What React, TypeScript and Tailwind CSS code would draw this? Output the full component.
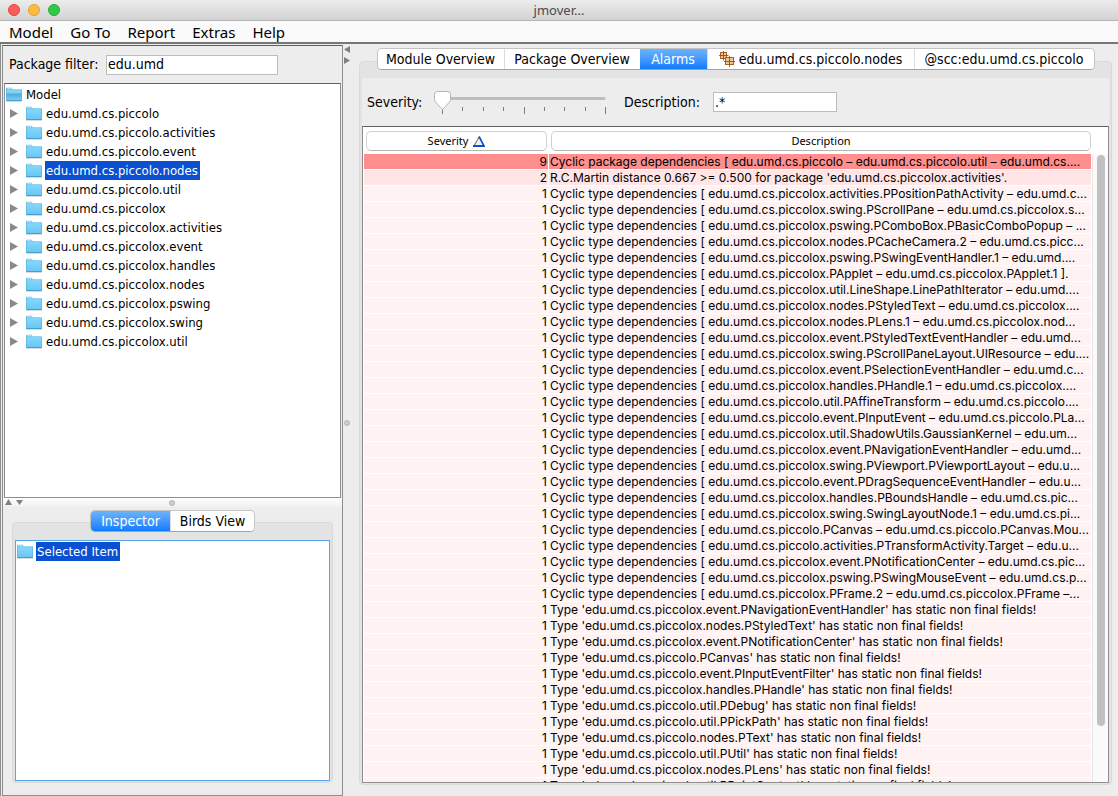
import React, { useState } from "react";
import clsx from "clsx";

interface Alarm {
  severity: number;
  text: string;
}

const PACKAGES = [
  "edu.umd.cs.piccolo",
  "edu.umd.cs.piccolo.activities",
  "edu.umd.cs.piccolo.event",
  "edu.umd.cs.piccolo.nodes",
  "edu.umd.cs.piccolo.util",
  "edu.umd.cs.piccolox",
  "edu.umd.cs.piccolox.activities",
  "edu.umd.cs.piccolox.event",
  "edu.umd.cs.piccolox.handles",
  "edu.umd.cs.piccolox.nodes",
  "edu.umd.cs.piccolox.pswing",
  "edu.umd.cs.piccolox.swing",
  "edu.umd.cs.piccolox.util",
];

const CYCLES = [
  "edu.umd.cs.piccolox.activities.PPositionPathActivity – edu.umd.c...",
  "edu.umd.cs.piccolox.swing.PScrollPane – edu.umd.cs.piccolox.s...",
  "edu.umd.cs.piccolox.pswing.PComboBox.PBasicComboPopup – ...",
  "edu.umd.cs.piccolox.nodes.PCacheCamera.2 – edu.umd.cs.picc...",
  "edu.umd.cs.piccolox.pswing.PSwingEventHandler.1 – edu.umd....",
  "edu.umd.cs.piccolox.PApplet – edu.umd.cs.piccolox.PApplet.1 ].",
  "edu.umd.cs.piccolox.util.LineShape.LinePathIterator – edu.umd....",
  "edu.umd.cs.piccolox.nodes.PStyledText – edu.umd.cs.piccolox....",
  "edu.umd.cs.piccolox.nodes.PLens.1 – edu.umd.cs.piccolox.nod...",
  "edu.umd.cs.piccolox.event.PStyledTextEventHandler – edu.umd...",
  "edu.umd.cs.piccolox.swing.PScrollPaneLayout.UIResource – edu....",
  "edu.umd.cs.piccolox.event.PSelectionEventHandler – edu.umd.c...",
  "edu.umd.cs.piccolox.handles.PHandle.1 – edu.umd.cs.piccolox....",
  "edu.umd.cs.piccolo.util.PAffineTransform – edu.umd.cs.piccolo....",
  "edu.umd.cs.piccolo.event.PInputEvent – edu.umd.cs.piccolo.PLa...",
  "edu.umd.cs.piccolox.util.ShadowUtils.GaussianKernel – edu.um...",
  "edu.umd.cs.piccolox.event.PNavigationEventHandler – edu.umd...",
  "edu.umd.cs.piccolox.swing.PViewport.PViewportLayout – edu.u...",
  "edu.umd.cs.piccolo.event.PDragSequenceEventHandler – edu.u...",
  "edu.umd.cs.piccolox.handles.PBoundsHandle – edu.umd.cs.pic...",
  "edu.umd.cs.piccolox.swing.SwingLayoutNode.1 – edu.umd.cs.pi...",
  "edu.umd.cs.piccolo.PCanvas – edu.umd.cs.piccolo.PCanvas.Mou...",
  "edu.umd.cs.piccolo.activities.PTransformActivity.Target – edu.u...",
  "edu.umd.cs.piccolox.event.PNotificationCenter – edu.umd.cs.pic...",
  "edu.umd.cs.piccolox.pswing.PSwingMouseEvent – edu.umd.cs.p...",
  "edu.umd.cs.piccolox.PFrame.2 – edu.umd.cs.piccolox.PFrame –...",
];

const STATIC_FIELDS = [
  "edu.umd.cs.piccolox.event.PNavigationEventHandler",
  "edu.umd.cs.piccolox.nodes.PStyledText",
  "edu.umd.cs.piccolox.event.PNotificationCenter",
  "edu.umd.cs.piccolo.PCanvas",
  "edu.umd.cs.piccolo.event.PInputEventFilter",
  "edu.umd.cs.piccolox.handles.PHandle",
  "edu.umd.cs.piccolo.util.PDebug",
  "edu.umd.cs.piccolo.util.PPickPath",
  "edu.umd.cs.piccolo.nodes.PText",
  "edu.umd.cs.piccolo.util.PUtil",
  "edu.umd.cs.piccolox.nodes.PLens",
  "edu.umd.cs.piccolo.util.PPaintContext",
];

const ALARMS: Alarm[] = [
  {
    severity: 9,
    text: "Cyclic package dependencies [ edu.umd.cs.piccolo – edu.umd.cs.piccolo.util – edu.umd.cs....",
  },
  {
    severity: 2,
    text: "R.C.Martin distance 0.667 >= 0.500 for package 'edu.umd.cs.piccolox.activities'.",
  },
  ...CYCLES.map((c) => ({ severity: 1, text: `Cyclic type dependencies [ ${c}` })),
  ...STATIC_FIELDS.map((t) => ({ severity: 1, text: `Type '${t}' has static non final fields!` })),
];

const FolderIcon = ({ open = false }: { open?: boolean }) => (
  <svg viewBox="0 0 16 15" className="w-4 h-[15px] shrink-0" aria-hidden="true">
    <defs>
      <linearGradient id="folderFront" x1="0" y1="0" x2="0" y2="1">
        <stop offset="0" stopColor="#84d6fb" />
        <stop offset="1" stopColor="#66c7f5" />
      </linearGradient>
      <linearGradient id="folderOpen" x1="0" y1="0" x2="0" y2="1">
        <stop offset="0" stopColor="#4ba8d4" />
        <stop offset="1" stopColor="#7ccdf3" />
      </linearGradient>
    </defs>
    <path d="M0 13V1.800Q0 .8 1 .8h4.500l1.300 1.400H15q1 0 1 .8v10z" fill="#5fb9e2" />
    <path d="M1 1.500h4.500M1 3h14" stroke="#a5e1fb" />
    <path d="M.3 3.500h15.400v10H.3z" fill="url(#folderFront)" />
    {open && <path d="M.5 6.500h15v6.500H.5z" fill="url(#folderOpen)" />}
    <path d="M0 3.500v10M16 3.500v10" stroke="#55b2de" />
    <path d="M.3 13.500h15.400" stroke="#459fcc" />
    <path d="M0 14.500h16" stroke="#000" strokeOpacity=".14" />
  </svg>
);

const Arrow = ({ dir }: { dir: "left" | "right" | "up" | "down" }) => {
  const shapes = {
    left: "M6 0v7L0 3.5z",
    right: "M0 0v7l6-3.5z",
    up: "M0 6h7L3.5 0z",
    down: "M0 1h7L3.5 6z",
  };
  return (
    <svg viewBox="0 0 7 7" className="w-[7px] h-[7px] block" aria-hidden="true">
      <path d={shapes[dir]} fill="#808080" />
    </svg>
  );
};

const PackagesIcon = () => (
  <svg viewBox="0 0 16 16" className="w-4 h-4 shrink-0" aria-hidden="true">
    <g stroke="#a5622a" fill="#f3c48c">
      <rect x="1.500" y="1.500" width="6" height="6" />
      <rect x="6.500" y="6.500" width="8" height="7" />
    </g>
    <path
      d="M4.500 0v9.500M0 4.500h9.500M10.500 5v11M5 10.500h11"
      fill="none"
      stroke="#8a4310"
      strokeOpacity=".8"
    />
  </svg>
);

const Grip = () => <span className="block w-[6px] h-[6px] rounded-full bg-[#cfcfcf] border border-[#b2b2b2]" />;

interface TabProps {
  label: string;
  active: boolean;
  width: string;
  onClick: () => void;
  icon?: React.ReactNode;
}

const Tab = ({ label, active, width, onClick, icon }: TabProps) => (
  <button
    role="tab"
    aria-selected={active}
    onClick={onClick}
    className={clsx(
      "h-5 flex items-center justify-center gap-1 text-[14px] leading-5 whitespace-nowrap",
      width,
      active
        ? "bg-gradient-to-b from-[#6cb3fa] to-[#0a7cff] text-white"
        : "bg-white text-black border-l border-[#dcdcdc] first:border-l-0"
    )}
  >
    {icon}
    {label}
  </button>
);

const MAIN_TABS = [
  { label: "Module Overview", width: "w-[126px]" },
  { label: "Package Overview", width: "w-[136px]" },
  { label: "Alarms", width: "w-[67px]" },
  { label: "edu.umd.cs.piccolo.nodes", width: "w-[207px]", icon: <PackagesIcon /> },
  { label: "@scc:edu.umd.cs.piccolo", width: "w-[180px]" },
];

const SIDE_TABS = [
  { label: "Inspector", width: "w-[79px]" },
  { label: "Birds View", width: "w-[84px]" },
];

const TAB_BAR =
  "relative z-10 flex self-center rounded-[5px] overflow-hidden border border-[#c4c4c4] border-b-[#a3a3a3]";

const SeveritySlider = () => {
  const [value, setValue] = useState(0);
  return (
    <div className="relative w-[180px] h-6">
      <svg viewBox="0 0 180 24" className="w-full h-full block" aria-hidden="true">
        <path d="M11 8.500h160" stroke="#bdbdbd" strokeWidth="3" strokeLinecap="round" />
        {[0, 1, 2, 3, 4, 5, 6, 7, 8].map((i) => (
          <path
            key={i}
            d={`M${9.5 + Math.round(i * 20.4)} 17v${i % 4 === 0 ? 7 : 4}`}
            stroke="#7d7d7d"
          />
        ))}
        <g transform={`translate(${value * 20.4} 0)`}>
          <path
            d="M4.500 1.500h10q3 0 3 3v5q0 1.500-1 2.500l-7 7.500-7-7.500q-1-1-1-2.500v-5q0-3 3-3z"
            fill="#fff"
            stroke="#b5b5b5"
          />
        </g>
      </svg>
      <input
        id="severity"
        type="range"
        min={0}
        max={8}
        value={value}
        onChange={(e) => setValue(Number(e.target.value))}
        className="absolute inset-0 w-full h-full appearance-none bg-transparent [&::-webkit-slider-thumb]:appearance-none [&::-webkit-slider-thumb]:w-4 [&::-webkit-slider-thumb]:h-5"
      />
    </div>
  );
};

const TitleBar = () => (
  <header className="relative h-[21px] shrink-0 flex items-center justify-center bg-gradient-to-b from-[#ececec] to-[#d3d3d3] border-b border-[#b4b4b4]">
    <div className="absolute left-2 flex gap-2">
      <button aria-label="Close" className="w-3 h-3 rounded-full bg-[#fc5b57] border border-[#e2443f]" />
      <button aria-label="Minimize" className="w-3 h-3 rounded-full bg-[#fdbc40] border border-[#e0a134]" />
      <button aria-label="Zoom" className="w-3 h-3 rounded-full bg-[#34c84a] border border-[#27a935]" />
    </div>
    <h1 className="font-['Noto_Sans',sans-serif] text-[13px] leading-5 text-[#4a4a4a]">jmover...</h1>
  </header>
);

const MenuBar = () => (
  <nav className="h-[23px] shrink-0 flex items-center gap-[17px] px-[9px] bg-[#fafafa] border-b-2 border-[#767676] font-['Noto_Sans',sans-serif] text-[15px] leading-5">
    {["Model", "Go To", "Report", "Extras", "Help"].map((m) => (
      <button key={m}>{m}</button>
    ))}
  </nav>
);

const PackageTree = () => {
  const [selected, setSelected] = useState("edu.umd.cs.piccolo.nodes");
  return (
    <ul className="flex-1 min-h-0 overflow-hidden bg-white border border-[#8e8e8e] border-t-[#606060] mx-px pt-px text-[13px] leading-[19px]">
      <li className="flex items-center h-[19px] pl-px">
        <FolderIcon open />
        <span className="px-1">Model</span>
      </li>
      {PACKAGES.map((p) => (
        <li key={p} className="flex items-center h-[19px] pl-[5px]">
          <svg viewBox="0 0 8 9" className="w-2 h-[9px] mr-2" aria-hidden="true">
            <path d="M0 0v9l8-4.500z" fill="#8a8a8a" />
          </svg>
          <FolderIcon />
          <button
            onClick={() => setSelected(p)}
            className={clsx("ml-[3px] pl-px pr-[2px]", p === selected && "bg-[#0a50d0] text-white")}
          >
            {p}
          </button>
        </li>
      ))}
    </ul>
  );
};

const SidePanel = () => {
  const [filter, setFilter] = useState("edu.umd");
  const [tab, setTab] = useState("Inspector");
  return (
    <aside className="w-[341px] shrink-0 flex flex-col mt-px ml-px border border-[#8e8e8e] border-t-[#606060]">
      <div className="flex items-center gap-2 h-[37px] shrink-0 px-[6px] text-[14px]">
        <label htmlFor="filter" className="w-[89px] whitespace-nowrap">
          Package filter:
        </label>
        <input
          id="filter"
          value={filter}
          onChange={(e) => setFilter(e.target.value)}
          className="w-[172px] h-5 px-px bg-white border border-[#bdbdbd] outline-none"
        />
      </div>
      <PackageTree />
      <div className="h-[9px] shrink-0 flex items-center gap-1 px-[2px] bg-gradient-to-b from-white to-[#f0f0f0]">
        <Arrow dir="up" />
        <Arrow dir="down" />
        <div className="flex-1 flex justify-center pr-6">
          <Grip />
        </div>
      </div>
      <section className="h-[288px] shrink-0 flex flex-col px-[9px] pt-[3px] pb-3">
        <div role="tablist" className={TAB_BAR}>
          {SIDE_TABS.map((t) => (
            <Tab key={t.label} {...t} active={tab === t.label} onClick={() => setTab(t.label)} />
          ))}
        </div>
        <div className="flex-1 -mt-[10px] flex flex-col rounded-[4px] bg-[#e3e3e3] border border-[#dadada] px-[2px] pt-[17px] pb-px">
          <div className="flex-1 bg-white border border-[#57a5ea] pt-px text-[13px] leading-[19px]">
            <div className="flex items-center pl-px">
              <FolderIcon />
              <span className="ml-[3px] pl-px pr-[2px] bg-[#0a50d0] text-white">Selected Item</span>
            </div>
          </div>
        </div>
      </section>
    </aside>
  );
};

const AlarmTable = () => (
  <div className="flex-1 min-h-0 flex bg-white border border-[#8e8e8e] border-t-[#606060] pl-px overflow-hidden">
    <div className="flex-1 min-w-0 h-0">
      <table className="w-full table-fixed border-separate border-spacing-0 font-['Inter',sans-serif] text-[12px]">
        <colgroup>
          <col className="w-[185px]" />
          <col />
        </colgroup>
        <thead className="font-['Noto_Sans',sans-serif] text-[11px]">
          <tr>
            <th className="pt-1 pb-[3px] pl-[2px] pr-[2px] font-normal">
              <button className="w-full h-5 flex items-center justify-center gap-[5px] rounded-[5px] bg-white border border-[#d0d0d0] border-b-[#b5b5b5]">
                Severity
                <svg viewBox="0 0 12 11" className="w-3 h-[11px]" aria-hidden="true">
                  <path d="M1 10L6 1" stroke="#8c8c8c" strokeWidth="1.500" />
                  <path d="M6 .5L11 10H0" fill="none" stroke="#1150c8" strokeWidth="1.800" />
                  <path d="M6 3l3 5.500H3z" fill="#eee" />
                </svg>
              </button>
            </th>
            <th className="pt-1 pb-[3px] pl-[2px] font-normal">
              <button className="w-full h-5 rounded-[5px] bg-white border border-[#d0d0d0] border-b-[#b5b5b5]">
                Description
              </button>
            </th>
          </tr>
        </thead>
        <tbody className="leading-[15px]">
          {ALARMS.map((a) => (
            <tr
              key={a.text}
              className={clsx(
                a.severity === 9 && "bg-[#ff8e8e]",
                a.severity === 2 && "bg-[#ffe5e5]",
                a.severity === 1 && "bg-[#fff2f2]"
              )}
            >
              <td className="h-4 p-0 pr-px text-right border-b border-r border-white">{a.severity}</td>
              <td className="h-4 p-0 pl-px whitespace-nowrap border-b border-white">{a.text}</td>
            </tr>
          ))}
        </tbody>
      </table>
    </div>
    <div className="w-4 ml-px mt-[27px] shrink-0 flex justify-center bg-[#fafafa] border-l border-[#e6e6e6]">
      <div className="w-2 h-[91%] mt-px rounded-full bg-[#c1c1c1]" />
    </div>
  </div>
);

const AlarmsPanel = () => {
  const [tab, setTab] = useState("Alarms");
  const [description, setDescription] = useState(".*");
  return (
    <main className="flex-1 min-w-0 flex flex-col pt-1 pl-2 pr-[6px] pb-[11px]">
      <div role="tablist" className={TAB_BAR}>
        {MAIN_TABS.map((t) => (
          <Tab key={t.label} {...t} active={tab === t.label} onClick={() => setTab(t.label)} />
        ))}
      </div>
      <div className="flex-1 min-h-0 -mt-[9px] flex flex-col rounded-[4px] bg-[#e3e3e3] border border-[#dadada] px-[2px] pt-4 pb-px">
        <div className="h-12 shrink-0 flex items-center px-[5px] bg-[#ededed] text-[14px]">
          <label htmlFor="severity" className="w-[66px]">
            Severity:
          </label>
          <SeveritySlider />
          <label htmlFor="description" className="w-[80px] ml-[11px]">
            Description:
          </label>
          <input
            id="description"
            value={description}
            onChange={(e) => setDescription(e.target.value)}
            className="w-[124px] h-5 ml-[9px] px-px bg-white border border-[#bdbdbd] outline-none"
          />
        </div>
        <AlarmTable />
      </div>
    </main>
  );
};

export default function App() {
  return (
    <div className="h-screen flex flex-col overflow-hidden bg-[#ededed] text-black font-['DejaVu_Sans_Condensed','Noto_Sans',sans-serif]">
      <TitleBar />
      <MenuBar />
      <div className="flex-1 min-h-0 flex border-l border-[#8e8e8e]">
        <SidePanel />
        <div className="relative w-2 shrink-0 flex flex-col items-center gap-1 pt-[2px]">
          <Arrow dir="left" />
          <Arrow dir="right" />
          <div className="absolute top-1/2">
            <Grip />
          </div>
        </div>
        <AlarmsPanel />
      </div>
    </div>
  );
}
